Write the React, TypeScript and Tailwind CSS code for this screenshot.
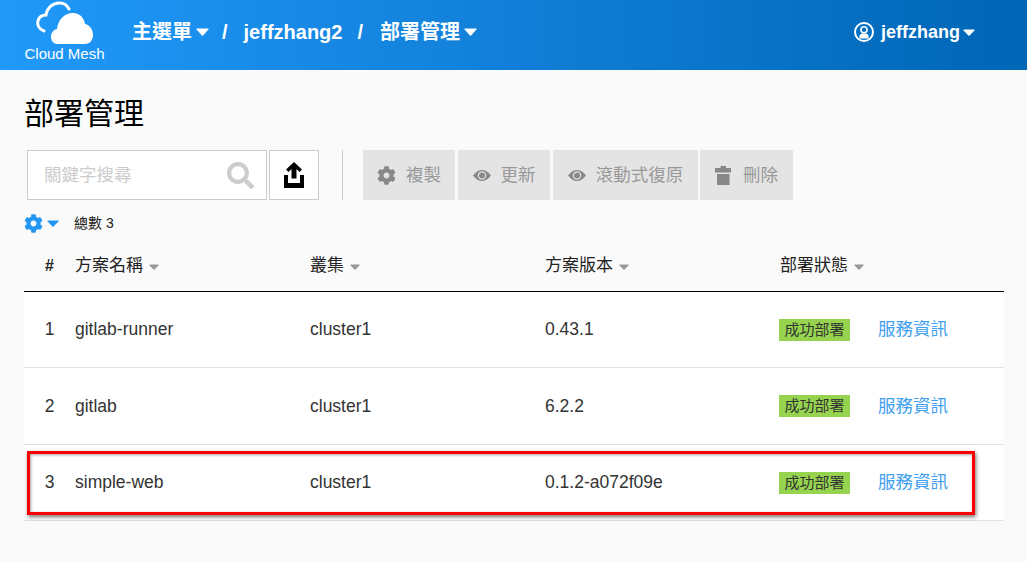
import { FaCog, FaSearch } from "react-icons/fa";

const FONT = "font-['Liberation_Sans','Noto_Sans_CJK_TC',sans-serif]";

const rows = [
  { id: 1, name: "gitlab-runner", version: "0.43.1", height: "h-[76px]" },
  { id: 2, name: "gitlab", version: "6.2.2", height: "h-[77px]" },
  { id: 3, name: "simple-web", version: "0.1.2-a072f09e", height: "h-[76px]" },
];

function Caret({ w, className = "" }: { w: number; className?: string }) {
  const h = Math.round(w / 2) + 1;
  return (
    <svg width={w} height={h} viewBox={`0 0 ${w} ${h}`} className={`block shrink-0 ${className}`}>
      <path
        d={`M1 0.5 H${w - 1} Q${w} 0.5 ${w - 0.6} 1.4 L${w / 2 + 0.6} ${h - 0.4} Q${w / 2} ${h} ${w / 2 - 0.6} ${h - 0.4} L0.6 1.4 Q0 0.5 1 0.5 Z`}
        fill="currentColor"
      />
    </svg>
  );
}

function CloudLogo() {
  return (
    <svg width="58" height="46" viewBox="0 0 58 46" className="block">
      {/* back cloud outline */}
      <path
        d="M8 31 C3 29 1 25 2 21 C3 17 6 15 10 15 C11 8 17 2.5 24 3 C28 3 31 5 33 9"
        fill="none"
        stroke="white"
        strokeWidth="3"
        strokeLinecap="round"
      />
      {/* front cloud */}
      <path
        d="M21 44 C17 44 15 40 15 37 C15 33 17 30 21 29 C22 20 28 13 37 13 C44 13 48 18 49 24 C54 25 57 30 57 35 C57 40 54 44 49 44 Z"
        fill="white"
      />
    </svg>
  );
}

function UserCircle() {
  return (
    <svg width="20" height="20" viewBox="0 0 20 20" className="block">
      <circle cx="10" cy="10" r="9" fill="none" stroke="white" strokeWidth="2" />
      <circle cx="10" cy="7.8" r="3" fill="none" stroke="white" strokeWidth="1.6" />
      <path d="M5.5 16.5 V14 C5.5 12.5 7 11.5 8 11.5 H12 C13 11.5 14.5 12.5 14.5 14 V16.5 Z" fill="white" />
    </svg>
  );
}

function UploadIcon() {
  return (
    <svg width="20" height="26" viewBox="0 0 20 26" className="block">
      <path d="M10 0 L18 7.5 L15.5 10 L12.5 7 V16.5 H7.5 V7 L4.5 10 L2 7.5 Z" fill="black" />
      <path d="M0 13 H4 V21 H16 V13 H20 V26 H0 Z" fill="black" />
    </svg>
  );
}

function EyeIcon() {
  return (
    <svg width="18" height="11" viewBox="0 0 18 11" className="block">
      <path d="M0 5.5 C3 1.5 6 0 9 0 C12 0 15 1.5 18 5.5 C15 9.5 12 11 9 11 C6 11 3 9.5 0 5.5 Z" fill="#888" />
      <circle cx="9" cy="5.5" r="3.6" fill="#888" stroke="#e4e4e4" strokeWidth="1.2" />
    </svg>
  );
}

function TrashIcon() {
  return (
    <svg width="16" height="19" viewBox="0 0 16 19" className="block">
      <path d="M5.5 0 H11 V2 H16 V6.5 H0 V2 H5.5 Z" fill="#888" />
      <rect x="2" y="8" width="12.5" height="11" fill="#888" />
    </svg>
  );
}

const actions = [
  { label: "複製", icon: <FaCog size={19} className="text-[#888]" />, cls: "w-[92px] gap-[10px]" },
  { label: "更新", icon: <EyeIcon />, cls: "w-[92px] gap-[10px]" },
  { label: "滾動式復原", icon: <EyeIcon />, cls: "w-[145px] gap-[10px]" },
  { label: "刪除", icon: <TrashIcon />, cls: "ml-[-1px] w-[93px] gap-[12px]" },
];

function SortHead({ label, width }: { label: string; width: string }) {
  return (
    <div className={`flex items-center gap-[6px] text-[17px] leading-[22px] text-[#222] ${width}`}>
      {label}
      <Caret w={10} className="mt-[2px] text-[#999]" />
    </div>
  );
}

export default function App() {
  return (
    <div className={`relative h-[562px] w-[1027px] overflow-hidden bg-[#fafafa] ${FONT}`}>
      {/* top bar */}
      <header className="flex h-[70px] items-start bg-gradient-to-r from-[#2099fa] to-[#0066b6] text-white">
        <div className="flex w-[129px] flex-col items-center">
          <CloudLogo />
          <span className="-mt-px text-[15px] leading-[17px]">Cloud Mesh</span>
        </div>
        <nav className="ml-[3px] mt-[19px] flex items-center text-[20px] font-bold leading-[26px]">
          <span>主選單</span>
          <Caret w={13} className="ml-[4px]" />
          <span className="ml-[13px]">/</span>
          <span className="ml-[16px]">jeffzhang2</span>
          <span className="ml-[15px]">/</span>
          <span className="ml-[17px]">部署管理</span>
          <Caret w={13} className="ml-[4px]" />
        </nav>
        <div className="ml-auto mr-[52px] mt-[19px] flex items-center text-[18px] font-bold leading-[26px]">
          <UserCircle />
          <span className="ml-[7px]">jeffzhang</span>
          <Caret w={12} className="ml-[3px]" />
        </div>
      </header>

      <main className="px-[24px]">
        <h1 className="mt-[24px] text-[30px] font-normal leading-[40px] text-black">部署管理</h1>

        {/* toolbar */}
        <div className="mt-[16px] flex h-[50px] items-stretch pl-[3px]">
          <div className="flex w-[240px] items-center justify-between border border-[#ccc] bg-white pl-[16px] pr-[12px]">
            <span className="text-[17.5px] text-[#ccc]">關鍵字搜尋</span>
            <FaSearch size={27} className="text-[#ccc]" />
          </div>
          <div className="ml-[2px] flex w-[50px] items-center justify-center border border-[#ccc] bg-white">
            <UploadIcon />
          </div>
          <div className="ml-[23px] mr-[20px] w-px bg-[#ccc]" />
          <div className="flex gap-[3px]">
            {actions.map((a) => (
              <div
                key={a.label}
                className={`flex items-center justify-center bg-[#e4e4e4] text-[#999] ${a.cls}`}
              >
                {a.icon}
                <span className="text-[17.5px]">{a.label}</span>
              </div>
            ))}
          </div>
        </div>

        {/* settings + total */}
        <div className="mt-[13px] flex h-[20px] items-center">
          <FaCog size={19} className="text-[#2196f3]" />
          <Caret w={12} className="ml-[4px] text-[#2196f3]" />
          <span className="ml-[15px] text-[14px] text-[#222]">總數 3</span>
        </div>

        {/* table */}
        <div className="mt-[21px] w-[980px]">
          <div className="flex h-[38px] items-start border-b border-black pt-px">
            <div className="w-[51px] text-center text-[16px] font-bold leading-[22px] text-[#222]">#</div>
            <SortHead label="方案名稱" width="w-[235px]" />
            <SortHead label="叢集" width="w-[235px]" />
            <SortHead label="方案版本" width="w-[235px]" />
            <SortHead label="部署狀態" width="w-[224px]" />
          </div>
          {rows.map((r) => (
            <div
              key={r.id}
              className={`flex items-center border-b border-[#e2e2e2] bg-white text-[17.5px] text-[#333] ${r.height}`}
            >
              <div className="w-[51px] text-center">{r.id}</div>
              <div className="w-[235px]">{r.name}</div>
              <div className="w-[235px]">cluster1</div>
              <div className="w-[234px]">{r.version}</div>
              <div className="flex w-[225px] items-center">
                <span className="bg-[#96d34e] px-[5.5px] text-[15px] leading-[22px] text-[#333]">成功部署</span>
                <span className="ml-[28px] text-[17.5px] text-[#3fa0f0]">服務資訊</span>
              </div>
            </div>
          ))}
        </div>
      </main>

      {/* red highlight drawn on top of row 3 */}
      <div className="pointer-events-none absolute left-[27px] top-[451px] h-[64px] w-[948px] border-[3px] border-[#f00] shadow-[1px_2px_4px_rgba(0,0,0,0.55),inset_1px_1px_3px_rgba(0,0,0,0.35)]" />
    </div>
  );
}
